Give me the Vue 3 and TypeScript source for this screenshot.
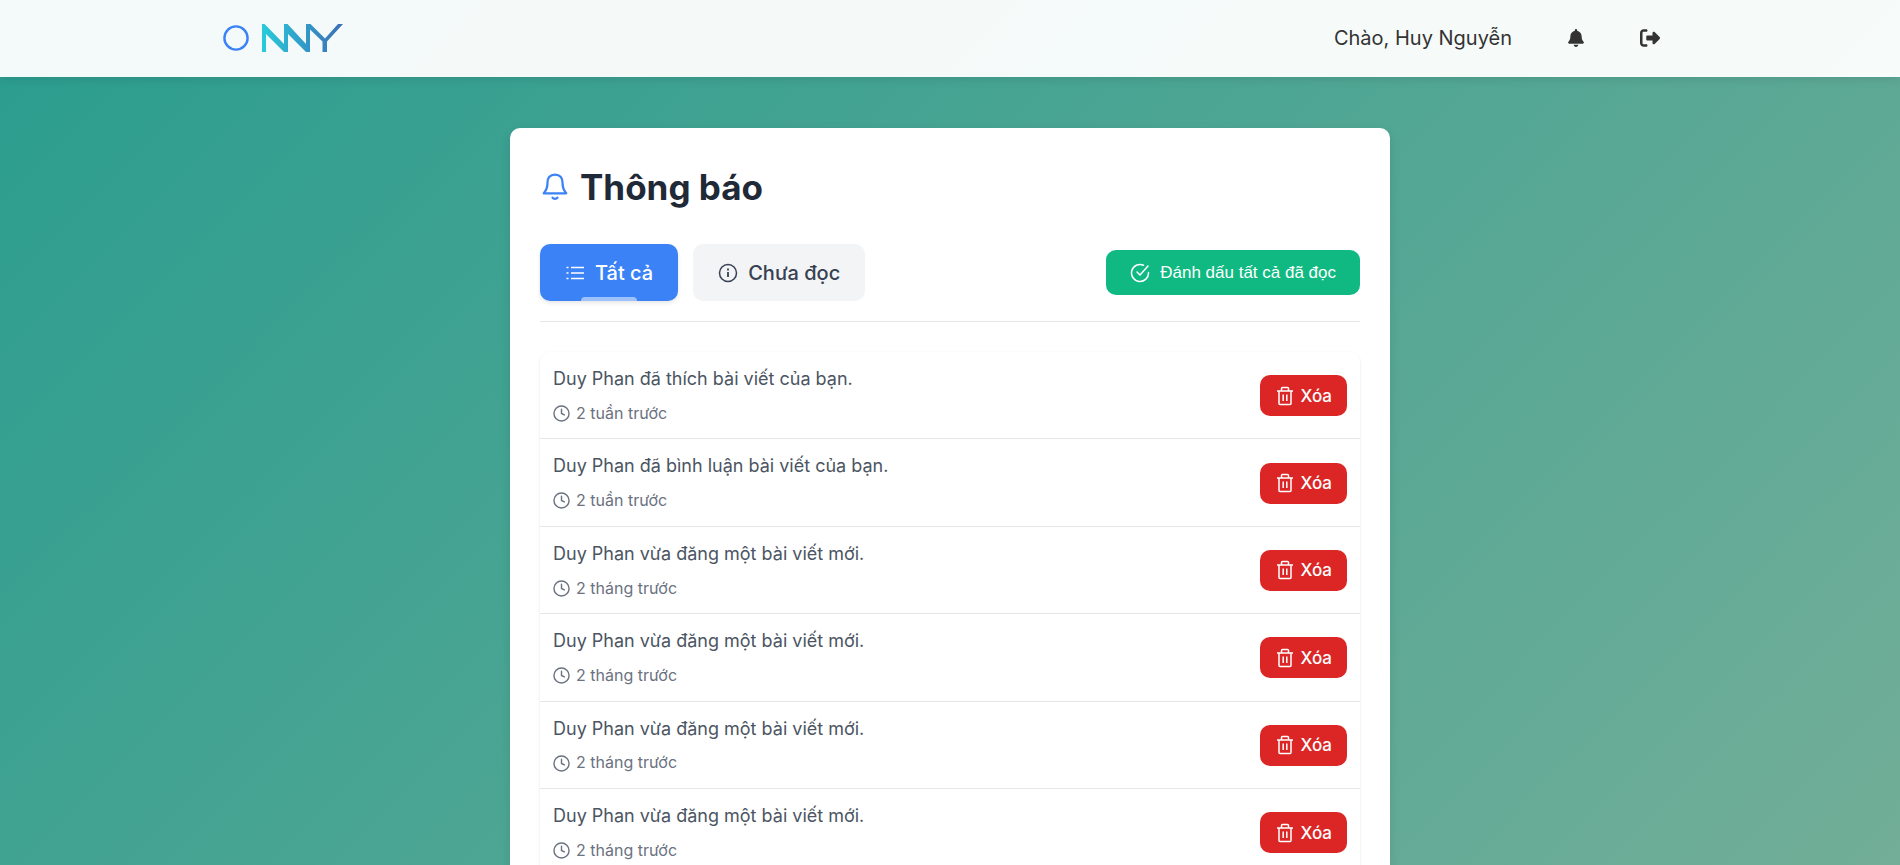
<script setup lang="ts">
import { ref, computed } from 'vue'

interface Notice {
  id: number
  message: string
  time: string
}

const filter = ref<'all' | 'unread'>('all')

const notices = ref<Notice[]>([
  { id: 1, message: 'Duy Phan đã thích bài viết của bạn.', time: '2 tuần trước' },
  { id: 2, message: 'Duy Phan đã bình luận bài viết của bạn.', time: '2 tuần trước' },
  { id: 3, message: 'Duy Phan vừa đăng một bài viết mới.', time: '2 tháng trước' },
  { id: 4, message: 'Duy Phan vừa đăng một bài viết mới.', time: '2 tháng trước' },
  { id: 5, message: 'Duy Phan vừa đăng một bài viết mới.', time: '2 tháng trước' },
  { id: 6, message: 'Duy Phan vừa đăng một bài viết mới.', time: '2 tháng trước' },
])

const shown = computed(() => (filter.value === 'all' ? notices.value : []))

function remove(id: number) {
  notices.value = notices.value.filter((n) => n.id !== id)
}
</script>

<template>
  <div class="page">
    <header class="header">
      <div class="header-inner">
        <a class="logo" href="#" aria-label="Trang chủ">
          <svg width="124" height="36" viewBox="0 0 124 36" fill="none">
            <defs>
              <linearGradient id="logo-fill" gradientUnits="userSpaceOnUse" x1="38" y1="0" x2="122" y2="0">
                <stop offset="0" stop-color="#26d0dc" />
                <stop offset="1" stop-color="#3c6eb8" />
              </linearGradient>
            </defs>
            <circle cx="16" cy="18" r="11.6" stroke="#3b82f6" stroke-width="2.4" />
            <path
              fill="url(#logo-fill)"
              d="M42 4h2.500L64 24V4h3.500L86 24V4h4.500L105 18.500L118 4h5L107 21.500V32h-4.500V21.500L90 9.500V32h-4L68 14V32h-4L46 14V32h-4Z"
            />
          </svg>
        </a>
        <nav class="nav">
          <span class="greeting">Chào, Huy Nguyễn</span>
          <button class="icon-button" type="button" aria-label="Thông báo">
            <svg width="18" height="18" viewBox="0 0 448 512" fill="currentColor">
              <path d="M224 512c35.320 0 63.970-28.650 63.970-64H160.030c0 35.350 28.650 64 63.970 64zm215.390-149.710c-19.320-20.760-55.470-51.990-55.470-154.290 0-77.700-54.480-139.900-127.940-155.160V32c0-17.670-14.320-32-31.980-32s-31.980 14.330-31.980 32v20.840C118.560 68.100 64.080 130.300 64.080 208c0 102.300-36.150 133.530-55.470 154.290-6 6.450-8.660 14.160-8.610 21.710.11 16.400 12.980 32 32.100 32h383.800c19.120 0 32-15.600 32.100-32 .05-7.550-2.610-15.270-8.610-21.710z" />
            </svg>
          </button>
          <button class="icon-button" type="button" aria-label="Đăng xuất">
            <svg width="20" height="20" viewBox="0 0 512 512" fill="currentColor">
              <path d="M502.600 278.600c12.500-12.500 12.500-32.800 0-45.300l-128-128c-9.200-9.200-22.900-11.900-34.900-6.900s-19.800 16.600-19.800 29.600v64H192c-17.700 0-32 14.300-32 32v64c0 17.700 14.300 32 32 32h128v64c0 12.900 7.800 24.600 19.800 29.600s25.700 2.200 34.900-6.900l128-128zM160 96c17.700 0 32-14.300 32-32s-14.300-32-32-32H96C43 32 0 75 0 128v256c0 53 43 96 96 96h64c17.700 0 32-14.300 32-32s-14.300-32-32-32H96c-17.700 0-32-14.300-32-32V128c0-17.700 14.300-32 32-32h64z" />
            </svg>
          </button>
        </nav>
      </div>
    </header>

    <main class="card">
      <h1 class="title">
        <svg class="title-icon" width="30" height="30" viewBox="0 0 24 24" fill="none" stroke="currentColor" stroke-width="1.800" stroke-linecap="round" stroke-linejoin="round">
          <path d="M18 8.500C18 4.500 16 2 12 2S6 4.500 6 8.500C6 13.500 4.600 15 3 17h18c-1.600-2-3-3.500-3-8.500z" />
          <path d="M14 20.500a2.300 2 0 0 1-4 0" />
        </svg>
        Thông báo
      </h1>

      <div class="toolbar">
        <div class="tabs">
          <button class="tab" :class="{ active: filter === 'all' }" type="button" @click="filter = 'all'">
            <svg width="20" height="20" viewBox="0 0 20 20" fill="none" stroke="currentColor" stroke-width="1.500">
              <path d="M6 4.500h13M6 10h13M6 15.500h13M1.500 4.500h2M1.500 10h2M1.500 15.500h2" />
            </svg>
            Tất cả
          </button>
          <button class="tab" :class="{ active: filter === 'unread' }" type="button" @click="filter = 'unread'">
            <svg width="20" height="20" viewBox="0 0 20 20" fill="none" stroke="currentColor" stroke-width="1.500">
              <circle cx="10" cy="10" r="8.500" />
              <path d="M10 9v5M10 5.500v2" stroke-width="1.800" />
            </svg>
            Chưa đọc
          </button>
        </div>
        <button class="mark-all" type="button">
          <svg width="20" height="20" viewBox="0 0 20 20" fill="none" stroke="currentColor" stroke-width="1.500" stroke-linecap="round" stroke-linejoin="round">
            <path d="M13.500 2.200A8.500 8.500 0 1 0 18.500 9.500" />
            <path d="M7 9l3 3 8-9" />
          </svg>
          Đánh dấu tất cả đã đọc
        </button>
      </div>

      <ul class="list">
        <li v-for="notice in shown" :key="notice.id" class="item">
          <div class="item-text">
            <p class="message">{{ notice.message }}</p>
            <p class="time">
              <svg width="17" height="17" viewBox="0 0 18 18" fill="none" stroke="currentColor" stroke-width="1.500" stroke-linecap="round">
                <circle cx="9" cy="9" r="8" />
                <path d="M9 4.500V9l3 1.500" />
              </svg>
              {{ notice.time }}
            </p>
          </div>
          <button class="delete" type="button" @click="remove(notice.id)">
            <svg width="20" height="20" viewBox="0 0 20 20" fill="none" stroke="currentColor" stroke-width="1.500" stroke-linejoin="round">
              <path d="M2 5h16M6.500 5V2.500a1 1 0 0 1 1-1h5a1 1 0 0 1 1 1V5M4 5v12.500a1 1 0 0 0 1 1h10a1 1 0 0 0 1-1V5M8.200 8.500v6.500M11.800 8.500v6.500" />
            </svg>
            Xóa
          </button>
        </li>
      </ul>
    </main>
  </div>
</template>

<style>
body {
  margin: 0;
}
</style>

<style scoped>
.page {
  height: 100vh;
  overflow: hidden;
  font-family: Inter, "Liberation Sans", sans-serif;
  background: linear-gradient(135deg, #2a9d8f, #72ae98);
}

.header {
  background: rgba(255, 255, 255, 0.95);
  box-shadow: 0 2px 10px rgba(0, 0, 0, 0.1);
}

.header-inner {
  display: flex;
  align-items: center;
  justify-content: space-between;
  width: calc(100% - 40px);
  max-width: 1460px;
  height: 77px;
  margin: 0 auto;
  padding: 0 20px 2px 0;
  box-sizing: border-box;
}

.logo {
  display: flex;
}

.nav {
  display: flex;
  align-items: center;
  gap: 55px;
}

.greeting {
  font-size: 20px;
  color: #333;
}

.icon-button {
  display: flex;
  padding: 0;
  border: 0;
  background: none;
  color: #333;
  cursor: pointer;
}

.card {
  width: 880px;
  max-width: calc(100% - 40px);
  margin: 51px auto 0;
  padding: 30px;
  box-sizing: border-box;
  border-radius: 10px;
  background: #fff;
  box-shadow: 0 4px 12px rgba(0, 0, 0, 0.1);
}

.title {
  display: flex;
  align-items: center;
  gap: 10px;
  margin: 0 0 28px;
  font-size: 35px;
  line-height: 58px;
  font-weight: 700;
  color: #1f2937;
}

.title-icon {
  color: #3b82f6;
}

.toolbar {
  display: flex;
  align-items: center;
  justify-content: space-between;
  padding-bottom: 20px;
  border-bottom: 1px solid #e5e7eb;
}

.tabs {
  display: flex;
  gap: 15px;
}

.tab {
  position: relative;
  display: flex;
  align-items: center;
  gap: 10px;
  height: 57px;
  padding: 0 25px;
  border: 0;
  border-radius: 10px;
  background: #f3f4f6;
  color: #374151;
  font: 500 20px Inter, sans-serif;
  cursor: pointer;
}

.tab.active {
  background: #3b82f6;
  color: #fff;
  box-shadow: 0 2px 4px rgba(0, 0, 0, 0.1);
}

.tab.active::after {
  content: "";
  position: absolute;
  bottom: 0;
  left: 30%;
  width: 40%;
  height: 4px;
  border-radius: 4px 4px 0 0;
  background: rgba(255, 255, 255, 0.5);
}

.mark-all {
  display: flex;
  align-items: center;
  gap: 10px;
  height: 45px;
  padding: 0 24px;
  border: 0;
  border-radius: 10px;
  background: #10b981;
  color: #fff;
  font: 17px "Liberation Sans", Arial, sans-serif;
  cursor: pointer;
}

.list {
  margin: 30px 0 0;
  padding: 0;
  list-style: none;
  border-radius: 10px;
  box-shadow: 0 1px 3px rgba(0, 0, 0, 0.1);
}

.item {
  display: flex;
  align-items: center;
  justify-content: space-between;
  padding: 13px 13px 12px;
  border-bottom: 1px solid #e5e7eb;
  line-height: 1.6;
}

.message {
  margin: 0 0 7px;
  font-size: 18px;
  color: #4b5563;
}

.time {
  display: flex;
  align-items: center;
  gap: 6px;
  margin: 0;
  font-size: 16px;
  color: #6b7280;
}

.delete {
  display: flex;
  align-items: center;
  gap: 5px;
  height: 41px;
  padding: 0 15px;
  border: 0;
  border-radius: 10px;
  background: #dc2626;
  color: #fff;
  font: 500 17px Inter, sans-serif;
  cursor: pointer;
}
</style>
